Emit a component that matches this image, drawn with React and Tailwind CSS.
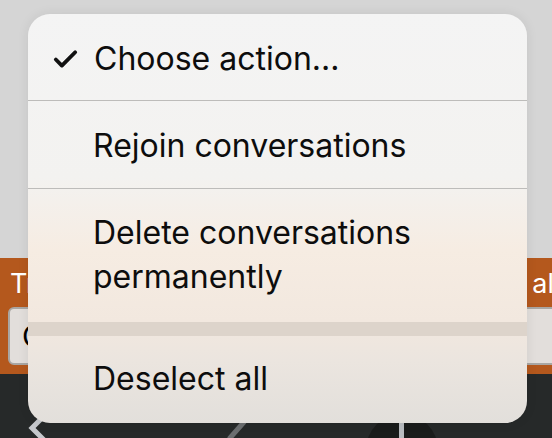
import { Check } from "lucide-react";

const FONT = { fontFamily: "Inter, 'Noto Sans', sans-serif" };

export default function App() {
    return (
        <div className="relative w-[552px] h-[438px] overflow-hidden" style={FONT}>
            {/* ===== page behind the menu ===== */}
            <div className="flex flex-col h-full">
                <div className="h-[258px] bg-[#d5d5d5]" />
                <div className="h-[116px] bg-[#b4581d] flex flex-col pl-2 pt-2">
                    <div className="flex justify-between text-white text-[27px] leading-[36px] pl-[2px]">
                        <span>Tr</span>
                        <span className="-mr-[2px]">al</span>
                    </div>
                    <div className="mt-[5px] h-[58px] -mr-4 bg-[#e2dedb] border-2 border-[#a9a6a3] rounded-md flex items-center px-3 text-[30px] text-black">
                        C
                    </div>
                </div>
                <div className="flex-1 bg-[#262929] relative">
                    <svg className="absolute left-[28px] top-[44px]" width="26" height="30" viewBox="0 0 26 30">
                        <path d="M12 2 L4 10 L18 24" fill="none" stroke="#c5c8cc" strokeWidth="5" strokeLinecap="round" />
                    </svg>
                    <svg className="absolute left-[224px] top-[44px]" width="24" height="24" viewBox="0 0 24 24">
                        <path d="M20 4 L6 20" fill="none" stroke="#6b6e70" strokeWidth="5" strokeLinecap="round" />
                    </svg>
                    <div className="absolute left-[366px] top-[40px] w-[72px] h-[72px] rounded-full bg-[#1a1c1b]" />
                    <div className="absolute left-[399px] top-[44px] w-[5px] h-[30px] bg-[#b9bcc0] rounded-sm" />
                </div>
            </div>

            {/* ===== action menu ===== */}
            <div className="absolute left-[28px] top-[14px] w-[499px] h-[409px] rounded-[22px] overflow-hidden flex flex-col text-[#0d0d0d] text-[32px] shadow-[0_0_12px_rgba(0,0,0,0.08)] bg-[linear-gradient(180deg,#f4f4f4_0%,#f3f2f0_40%,#f6ece2_58%,#f2e8df_75%,#ebe5df_85%,#e2dfdb_100%)]">
                <div className="h-[87px] flex items-center gap-[14px] pl-[23px] pt-[4px] border-b border-[#bdbcba]">
                    <Check size={29} strokeWidth={3.2} className="text-[#111]" />
                    <span>Choose action...</span>
                </div>
                <div className="h-[88px] flex items-center pl-[65px] pt-[2px] border-b border-[#bdbcba]">
                    Rejoin conversations
                </div>
                <div className="h-[133px] flex flex-col justify-center pl-[65px] leading-[44px] pb-[2px]">
                    <span>Delete conversations</span>
                    <span>permanently</span>
                </div>
                <div className="h-[14px] bg-[#ddd4cb]" />
                <div className="flex-1 flex items-center pl-[65px] pb-[2px]">
                    Deselect all
                </div>
            </div>
        </div>
    );
}
